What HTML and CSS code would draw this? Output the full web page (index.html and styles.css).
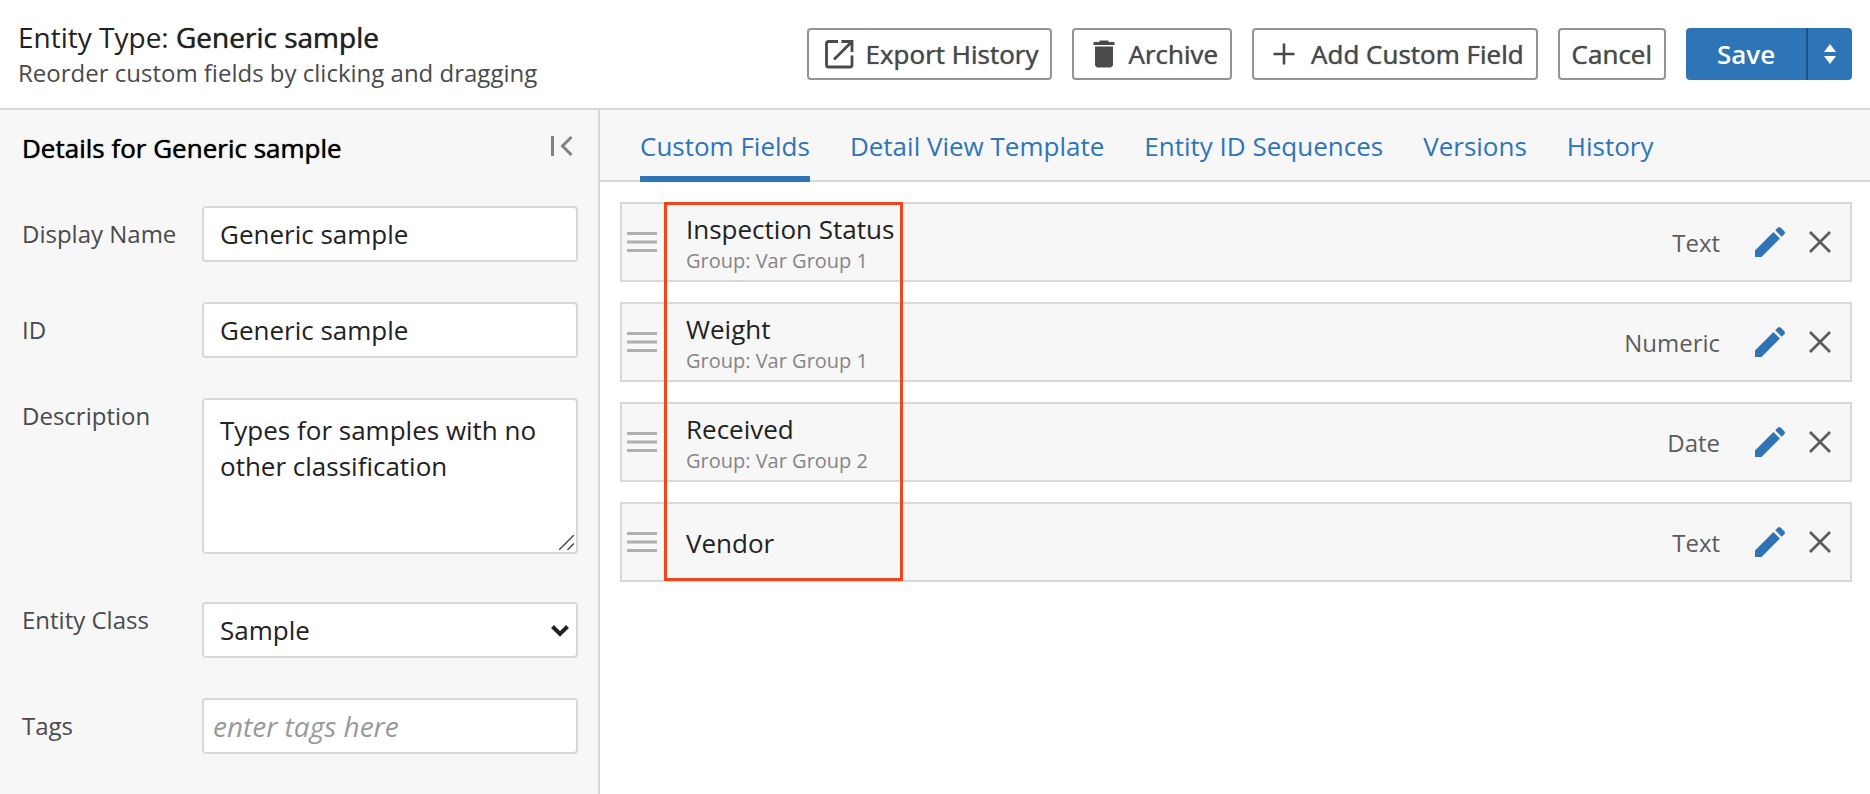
FILE: index.html
```
<!DOCTYPE html>
<html lang="en">
<head>
<meta charset="utf-8">
<title>Entity Type: Generic sample</title>
<link rel="stylesheet" href="styles.css">
</head>
<body>
<svg class="defs" aria-hidden="true">
  <symbol id="handle" viewBox="0 0 30 20"><path d="M0 1.5h30M0 10h30M0 18.5h30" fill="none" stroke="#b0b0b0" stroke-width="3"/></symbol>
  <symbol id="pencil" viewBox="0 0 30 30"><path d="M0 30V23.5L18.4 5.1L24.9 11.6L6.5 30zM20.2 3.3L22.8 .7Q24.300 -.6 25.800 .7L29.300 4.200Q30.600 5.700 29.300 7.200L26.700 9.800z" fill="#2e75b8"/></symbol>
  <symbol id="cross" viewBox="0 0 22 22"><path d="M1 1l20 20M21 1L1 21" fill="none" stroke="#5c5c5c" stroke-width="2.700"/></symbol>
</svg>
<header class="topbar">
  <div class="heading">
    <h1 class="title">Entity Type: <span class="strong">Generic sample</span></h1>
    <p class="subtitle">Reorder custom fields by clicking and dragging</p>
  </div>
  <div class="actions">
    <button class="btn btn-wide" type="button">
      <svg class="btn-icon" viewBox="0 0 36 36"><path d="M17 5.500H7.500a2 2 0 0 0-2 2V29a2 2 0 0 0 2 2H29a2 2 0 0 0 2-2v-9.500M20.500 5.500H31V16M31 5.500L13 23.500" fill="none" stroke="currentColor" stroke-width="2.800"/></svg>
      Export History</button>
    <button class="btn" type="button">
      <svg class="btn-icon" viewBox="0 0 24 24"><path d="M6 19c0 1.100.9 2 2 2h8c1.100 0 2-.9 2-2V7H6v12zM19 4h-3.500l-1-1h-5l-1 1H5v2h14V4z" fill="currentColor"/></svg>
      Archive</button>
    <button class="btn btn-wide" type="button">
      <svg class="btn-icon" viewBox="0 0 36 36"><path d="M18 7.500v21M7.500 18h21" fill="none" stroke="currentColor" stroke-width="2.600"/></svg>
      Add Custom Field</button>
    <button class="btn" type="button">Cancel</button>
    <div class="split">
      <button class="save" type="button">Save</button>
      <button class="save-more" type="button" aria-label="More save options">
        <svg class="sort-icon" viewBox="0 0 12 20"><path d="M6 0l6 8H0zM0 12h12l-6 8z" fill="currentColor"/></svg>
      </button>
    </div>
  </div>
</header>
<div class="body">
  <aside class="sidebar">
    <div class="side-head">
      <h2 class="side-title">Details for Generic sample</h2>
      <button class="icon-btn collapse" type="button" aria-label="Collapse details">
        <svg class="collapse-icon" viewBox="0 0 22 20"><path d="M1.500 0v20M20.500 1L11.500 10l9 9" fill="none" stroke="#828282" stroke-width="3"/></svg>
      </button>
    </div>
    <form class="form">
      <div class="row">
        <label class="label" for="display-name">Display Name</label>
        <input class="control" id="display-name" type="text" value="Generic sample">
      </div>
      <div class="row">
        <label class="label" for="entity-id">ID</label>
        <input class="control" id="entity-id" type="text" value="Generic sample">
      </div>
      <div class="row row-top">
        <label class="label" for="description">Description</label>
        <div class="wrap">
          <textarea class="control area" id="description">Types for samples with no other classification</textarea>
          <svg class="grip" viewBox="0 0 16 16"><path d="M0 16L16 0M9 16l7-7" fill="none" stroke="#444" stroke-width="1.500"/></svg>
        </div>
      </div>
      <div class="row row-top row-class">
        <label class="label" for="entity-class">Entity Class</label>
        <div class="wrap">
          <select class="control select" id="entity-class"><option>Sample</option></select>
          <svg class="chevron" viewBox="0 0 18 12"><path d="M1.500 1.500L9 9l7.500-7.500" fill="none" stroke="#222" stroke-width="4"/></svg>
        </div>
      </div>
      <div class="row">
        <label class="label" for="tags">Tags</label>
        <input class="control tags" id="tags" type="text" placeholder="enter tags here">
      </div>
    </form>
  </aside>
  <main class="main">
    <nav class="tabs">
      <a class="tab tab-active" href="#fields">Custom Fields</a>
      <a class="tab" href="#template">Detail View Template</a>
      <a class="tab" href="#sequences">Entity ID Sequences</a>
      <a class="tab" href="#versions">Versions</a>
      <a class="tab" href="#history">History</a>
    </nav>
    <div class="list-area">
      <ul class="list" id="fields">
        <li class="card">
          <svg class="handle"><use href="#handle"/></svg>
          <div class="info"><div class="name">Inspection Status</div><div class="group">Group: Var Group 1</div></div>
          <span class="type">Text</span>
          <button class="icon-btn" type="button" aria-label="Edit"><svg class="pencil"><use href="#pencil"/></svg></button>
          <button class="icon-btn" type="button" aria-label="Remove"><svg class="cross"><use href="#cross"/></svg></button>
        </li>
        <li class="card">
          <svg class="handle"><use href="#handle"/></svg>
          <div class="info"><div class="name">Weight</div><div class="group">Group: Var Group 1</div></div>
          <span class="type">Numeric</span>
          <button class="icon-btn" type="button" aria-label="Edit"><svg class="pencil"><use href="#pencil"/></svg></button>
          <button class="icon-btn" type="button" aria-label="Remove"><svg class="cross"><use href="#cross"/></svg></button>
        </li>
        <li class="card">
          <svg class="handle"><use href="#handle"/></svg>
          <div class="info"><div class="name">Received</div><div class="group">Group: Var Group 2</div></div>
          <span class="type">Date</span>
          <button class="icon-btn" type="button" aria-label="Edit"><svg class="pencil"><use href="#pencil"/></svg></button>
          <button class="icon-btn" type="button" aria-label="Remove"><svg class="cross"><use href="#cross"/></svg></button>
        </li>
        <li class="card">
          <svg class="handle"><use href="#handle"/></svg>
          <div class="info"><div class="name">Vendor</div></div>
          <span class="type">Text</span>
          <button class="icon-btn" type="button" aria-label="Edit"><svg class="pencil"><use href="#pencil"/></svg></button>
          <button class="icon-btn" type="button" aria-label="Remove"><svg class="cross"><use href="#cross"/></svg></button>
        </li>
      </ul>
      <div class="highlight"></div>
    </div>
  </main>
</div>
</body>
</html>
```
FILE: styles.css
```
* { box-sizing: border-box; }

body {
  margin: 0;
  min-height: 100vh;
  display: flex;
  flex-direction: column;
  background: #fff;
  color: #222;
  font-family: "Open Sans", "Noto Sans", sans-serif;
  font-size: 26px;
}

h1, h2, p, ul { margin: 0; padding: 0; font-weight: 400; }
button, input, textarea, select { font: inherit; color: inherit; margin: 0; }
svg { display: block; flex: none; }
.defs { position: absolute; width: 0; height: 0; }
.strong, .side-title, .btn { text-shadow: 0 0 1px currentColor; }

.topbar {
  display: flex;
  justify-content: space-between;
  align-items: flex-start;
  padding: 17px 18px 16px;
  border-bottom: 2px solid #d8d8d8;
}
.title { font-size: 28px; line-height: 40px; }
.subtitle { font-size: 24px; line-height: 32px; color: #4a4a4a; }
.heading { padding-bottom: 3px; }

.actions { display: flex; gap: 20px; padding-top: 11px; }
.btn {
  display: flex;
  align-items: center;
  gap: 6px;
  height: 52px;
  padding: 0 12px;
  background: #fff;
  border: 2px solid #949494;
  border-radius: 4px;
  color: #4a4a4a;
  white-space: nowrap;
}
.btn-wide { gap: 9px; }
.btn-icon { width: 36px; height: 36px; }
.split {
  display: flex;
  height: 52px;
  border-radius: 4px;
  overflow: hidden;
  color: #fff;
}
.save, .save-more { border: 0; background: #2e75b8; }
.save { width: 120px; padding: 0; font-weight: 600; }
.save-more {
  width: 46px;
  padding: 0;
  border-left: 2px solid #1f5282;
  display: grid;
  place-items: center;
}
.sort-icon { width: 12px; height: 20px; }

.body { flex: 1; display: flex; }
.sidebar {
  flex: none;
  width: 600px;
  padding: 16px 20px 40px 22px;
  background: #f7f7f7;
  border-right: 2px solid #d8d8d8;
}
.side-head {
  display: flex;
  justify-content: space-between;
  align-items: center;
  padding-right: 5px;
  color: #000;
}
.side-title { font-size: 26px; line-height: 44px; }
.icon-btn { padding: 0; border: 0; background: none; }
.collapse { padding-bottom: 4px; }
.collapse-icon { width: 22px; height: 20px; }

.form { display: grid; gap: 40px; padding-top: 36px; }
.row { display: grid; grid-template-columns: 180px 1fr; align-items: center; }
.row-top { align-items: start; }
.row-class { padding-top: 8px; }
.label { font-size: 24px; line-height: 36px; color: #4a4a4a; }
.control {
  display: block;
  width: 100%;
  height: 56px;
  padding: 0 16px;
  border: 2px solid #d8d8d8;
  border-radius: 4px;
  background: #fff;
  outline: 0;
}
.wrap { position: relative; }
.area { height: 156px; padding: 12px 16px; line-height: 36px; resize: none; overflow: hidden; }
.grip { position: absolute; right: 4px; bottom: 4px; width: 15px; height: 15px; }
.select { appearance: none; }
.chevron { position: absolute; right: 9px; top: 23px; width: 18px; height: 12px; pointer-events: none; }
.tags { padding: 0 9px; font-size: 28px; }
.tags::placeholder { color: #999; font-style: italic; opacity: 1; }

.main { flex: 1; min-width: 0; }
.tabs {
  display: flex;
  gap: 40px;
  height: 72px;
  padding-left: 40px;
  background: #f7f7f7;
  border-bottom: 2px solid #d8d8d8;
}
.tab {
  height: 72px;
  line-height: 72px;
  color: #2e75b8;
  text-decoration: none;
  white-space: nowrap;
}
.tab-active { border-bottom: 6px solid #2e75b8; }

.list-area { position: relative; padding: 20px 18px 20px 20px; }
.list { display: grid; gap: 20px; list-style: none; }
.card {
  display: flex;
  align-items: center;
  height: 80px;
  padding: 0 19px 0 5px;
  background: #f7f7f7;
  border: 2px solid #d8d8d8;
}
.handle { width: 30px; height: 20px; }
.info { flex: 1; padding: 2px 0 0 29px; }
.name { line-height: 36px; }
.group { font-size: 20px; line-height: 28px; color: #858585; }
.type { margin-right: 35px; font-size: 24px; color: #5c5c5c; }
.pencil { width: 30px; height: 30px; margin-right: 24px; }
.cross { width: 22px; height: 22px; }
.highlight {
  position: absolute;
  left: 64px;
  top: 20px;
  bottom: 21px;
  width: 239px;
  border: 3px solid #f2441d;
  pointer-events: none;
}
```
